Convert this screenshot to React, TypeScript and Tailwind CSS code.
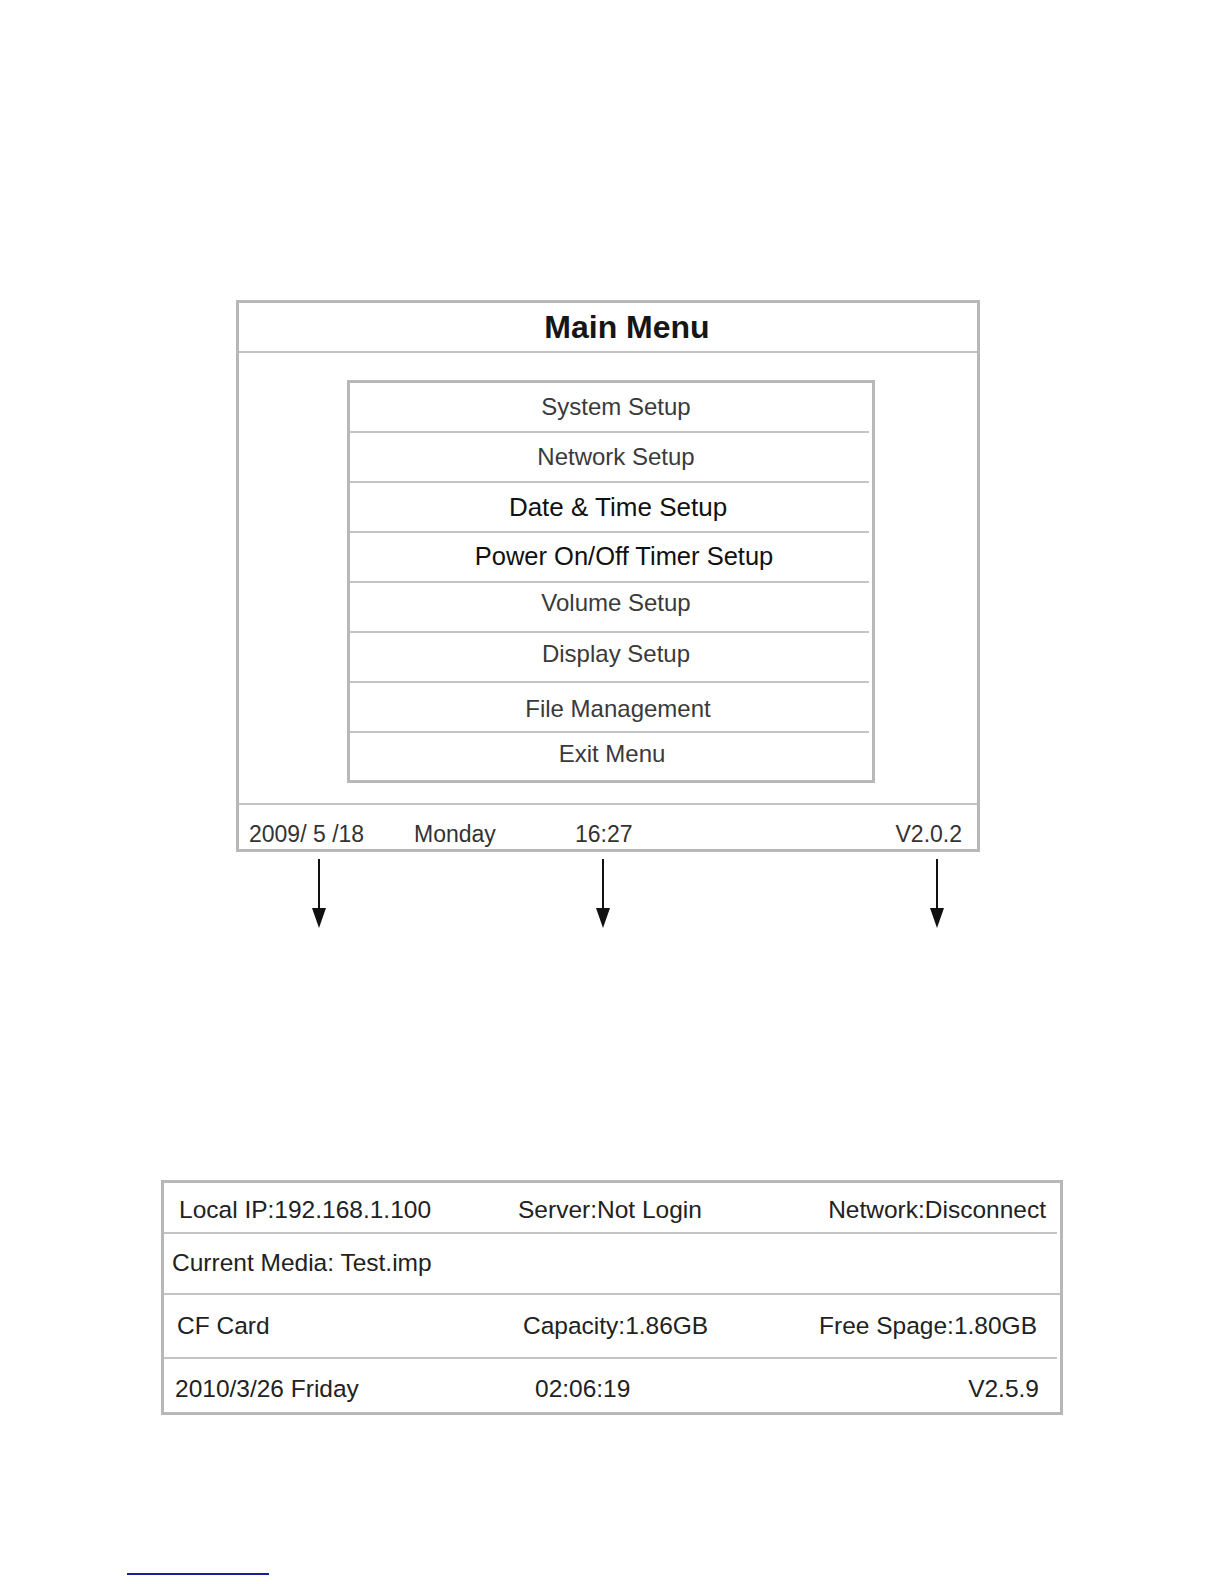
import React from 'react';

const menuItems = [
  { label: 'System Setup', size: 'text-[24px] text-[#3a3a3a]', shift: 'pl-[10px]' },
  { label: 'Network Setup', size: 'text-[24px] text-[#3a3a3a]', shift: 'pl-[10px]' },
  { label: 'Date & Time Setup', size: 'text-[26px] text-[#111]', shift: 'pl-[14px]' },
  { label: 'Power On/Off Timer Setup', size: 'text-[25.5px] text-[#111]', shift: 'pl-[26px]' },
  { label: 'Volume Setup', size: 'text-[24px] text-[#3a3a3a]', shift: 'pl-[10px] pb-[8px]' },
  { label: 'Display Setup', size: 'text-[24px] text-[#3a3a3a]', shift: 'pl-[10px] pb-[6px]' },
  { label: 'File Management', size: 'text-[24px] text-[#3a3a3a]', shift: 'pl-[14px] pt-[4px]' },
  { label: 'Exit Menu', size: 'text-[24px] text-[#3a3a3a]', shift: 'pl-[2px] pb-[6px]' },
];

const DownArrow: React.FC = () => (
  <svg width="14" height="69" viewBox="0 0 14 69" className="block">
    <line x1="7" y1="0" x2="7" y2="52" stroke="#111" strokeWidth="2" />
    <polygon points="0,49 14,49 7,69" fill="#111" />
  </svg>
);

const MainMenu: React.FC = () => (
  <div className="ml-[236px] w-[744px] h-[552px] border-[3px] border-[#b8b8b8] flex flex-col bg-white">
    <div className="h-[48px] flex items-center justify-center pl-[38px] border-b-2 border-[#c4c4c4] box-content">
      <span className="text-[32px] font-bold text-[#161616] leading-none">Main Menu</span>
    </div>
    <div className="h-[450px] pt-[27px] pl-[108px]">
      <div className="w-[528px] h-[403px] border-[3px] border-[#b8b8b8] flex flex-col">
        {menuItems.map((item, i) => (
          <React.Fragment key={item.label}>
            {i > 0 && <div className="h-[2px] bg-[#c4c4c4] mr-[3px]" />}
            <div
              className={`${i === menuItems.length - 1 ? 'h-[47px]' : 'h-[48px]'} flex items-center justify-center ${item.shift} leading-none ${item.size}`}
            >
              {item.label}
            </div>
          </React.Fragment>
        ))}
      </div>
    </div>
    <div className="h-[46px] border-t-2 border-[#c4c4c4] flex items-center pt-[14px] pl-[10px] pr-[15px] text-[23px] leading-none text-[#333]">
      <span className="w-[165px]">2009/ 5 /18</span>
      <span className="w-[161px]">Monday</span>
      <span>16:27</span>
      <span className="ml-auto">V2.0.2</span>
    </div>
  </div>
);

const StatusPanel: React.FC = () => (
  <div className="ml-[161px] w-[902px] h-[235px] border-[3px] border-[#b8b8b8] flex flex-col text-[24.5px] leading-none text-[#222]">
    <div className="h-[49px] flex items-center pt-[6px] pl-[15px] pr-[14px]">
      <span className="w-[339px]">Local IP:192.168.1.100</span>
      <span>Server:Not Login</span>
      <span className="ml-auto">Network:Disconnect</span>
    </div>
    <div className="h-[2px] bg-[#c4c4c4] mr-[3px]" />
    <div className="h-[59px] flex items-center pl-[8px]">
      <span>Current Media: Test.imp</span>
    </div>
    <div className="h-[2px] bg-[#c4c4c4]" />
    <div className="h-[62px] flex items-center pl-[13px] pr-[23px]">
      <span className="w-[346px]">CF Card</span>
      <span>Capacity:1.86GB</span>
      <span className="ml-auto">Free Spage:1.80GB</span>
    </div>
    <div className="h-[2px] bg-[#c4c4c4] mr-[3px]" />
    <div className="h-[53px] flex items-center pt-[8px] pl-[11px] pr-[21px]">
      <span className="w-[360px]">2010/3/26 Friday</span>
      <span>02:06:19</span>
      <span className="ml-auto">V2.5.9</span>
    </div>
  </div>
);

export default function App() {
  return (
    <div className="w-[1224px] h-[1584px] bg-white overflow-hidden" style={{ fontFamily: '"Liberation Sans", Arial, sans-serif' }}>
      <div className="h-[300px]" />
      <MainMenu />
      <div className="flex pl-[312px] mt-[7px]">
        <DownArrow />
        <div className="ml-[270px]">
          <DownArrow />
        </div>
        <div className="ml-[320px]">
          <DownArrow />
        </div>
      </div>
      <div className="h-[252px]" />
      <StatusPanel />
      <div className="ml-[127px] mt-[158px] w-[142px] h-[2px] bg-[#1c1ca0]" />
    </div>
  );
}
